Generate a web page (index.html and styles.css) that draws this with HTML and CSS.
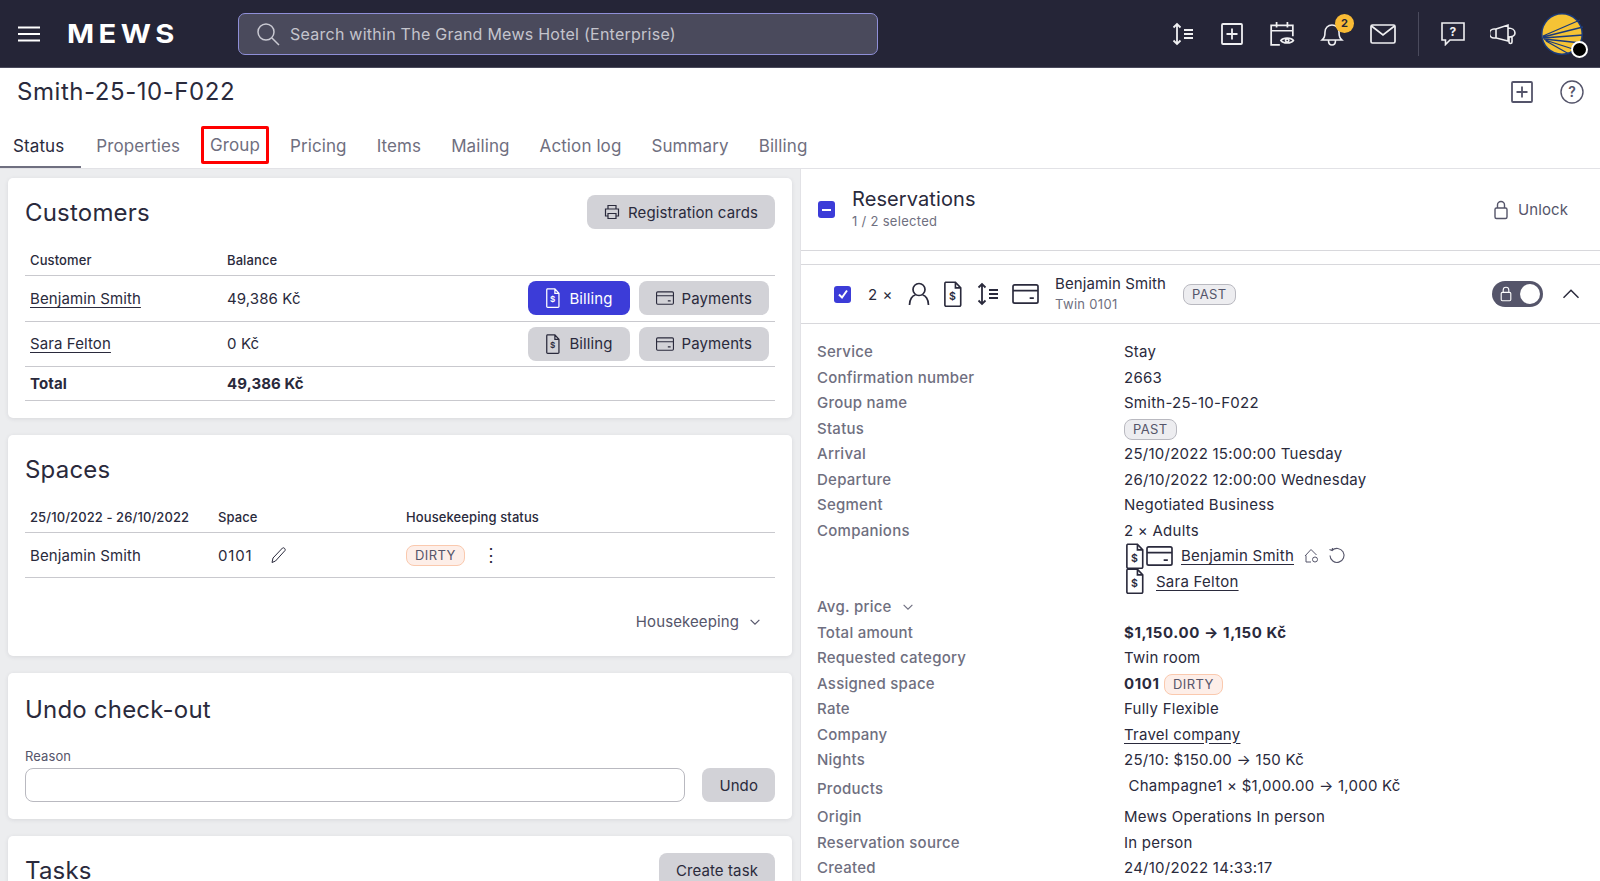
FILE: index.html
```html
<!DOCTYPE html>
<html lang="en">
<head>
    <meta charset="UTF-8">
    <title>Smith-25-10-F022</title>
    <link rel="stylesheet" href="styles.css">
</head>
<body>
    <svg class="sprites" width="0" height="0">
        <symbol id="i-bill" viewBox="0 0 24 32"><path d="M3 1.5h12l6.500 7v21a1.500 1.500 0 0 1-1.500 1.500H3.500A1.500 1.500 0 0 1 2 29.500V3a1.500 1.500 0 0 1 1-1.500zM15 1.500v7h6.500" fill="none" stroke="currentColor" stroke-width="2"/><text x="11.500" y="23" font-size="13" font-weight="600" text-anchor="middle" fill="currentColor" font-family="Inter, sans-serif">$</text></symbol>
        <symbol id="i-card" viewBox="0 0 32 24"><rect x="1" y="1" width="30" height="22" rx="2" fill="none" stroke="currentColor" stroke-width="2"/><path d="M1 8h30M21 17h5" fill="none" stroke="currentColor" stroke-width="2"/></symbol>
        <symbol id="i-sort" viewBox="0 0 24 24"><path d="M6 2v20M2.500 5.500 6 2l3.500 3.500M2.500 18.500 6 22l3.500-3.500M13 8h9M13 12h9M13 16h9" fill="none" stroke="currentColor" stroke-width="1.800"/></symbol>
        <symbol id="i-plus" viewBox="0 0 24 24"><rect x="2" y="2" width="20" height="20" rx="1" fill="none" stroke="currentColor" stroke-width="1.800"/><path d="M12 6.500v11M6.500 12h11" fill="none" stroke="currentColor" stroke-width="1.800"/></symbol>
        <symbol id="i-chev" viewBox="0 0 16 16"><path d="M3 5.500 8 10.500 13 5.500" fill="none" stroke="currentColor" stroke-width="1.300"/></symbol>
        <symbol id="i-lock" viewBox="0 0 16 20"><rect x="2" y="8" width="12" height="10.500" rx="1.500" fill="none" stroke="currentColor" stroke-width="1.400"/><path d="M4.500 8V5a3.500 3.500 0 0 1 7 0v3" fill="none" stroke="currentColor" stroke-width="1.400"/></symbol>
    </svg>

    <header class="topbar">
        <button class="icon-btn burger"><svg width="22" height="16" viewBox="0 0 22 16"><path d="M0 1.500h22M0 8h22M0 14.500h22" stroke="#fff" stroke-width="2"/></svg></button>
        <div class="logo">MEWS</div>
        <div class="search">
            <svg width="24" height="24" viewBox="0 0 24 24"><circle cx="10" cy="10" r="8" fill="none" stroke="#c9c9d2" stroke-width="1.500"/><path d="m16 16 7 7" stroke="#c9c9d2" stroke-width="1.500"/></svg>
            <span>Search within The Grand Mews Hotel (Enterprise)</span>
        </div>
        <nav class="top-icons">
            <svg class="ti" width="24" height="24"><use href="#i-sort"/></svg>
            <svg class="ti" width="24" height="24"><use href="#i-plus"/></svg>
            <svg class="ti" width="26" height="26" viewBox="0 0 24 24" fill="none" stroke="currentColor" stroke-width="1.600"><path d="M10 22H2V4h20v10M2 9h20M7 1v5M17 1v5"/><path d="M11 18c2-3 9.500-3 11.500 0-2 3-9.500 3-11.500 0z"/><circle cx="16.800" cy="18" r="1.500"/></svg>
            <div class="bell">
                <svg width="24" height="26" viewBox="0 0 24 26" fill="none" stroke="currentColor" stroke-width="1.600"><path d="M2 19c2-2 3-3 3-8 0-4 3-7 7-7s7 3 7 7c0 5 1 6 3 8zM8.500 19.500c0 6 7 6 7 0"/></svg>
                <span class="badge">2</span>
            </div>
            <svg class="ti" width="26" height="20" viewBox="0 0 26 20" fill="none" stroke="currentColor" stroke-width="1.700"><rect x="1" y="1" width="24" height="18" rx="1.500"/><path d="m1.500 2 11.500 9 11.500-9"/></svg>
            <span class="top-sep"></span>
            <svg class="ti" width="24" height="24" viewBox="0 0 24 24" fill="none" stroke="currentColor" stroke-width="1.600"><path d="M1 1h22v17H9l-4.500 4.500V18H1z"/><text x="12" y="14" font-size="12" font-weight="700" text-anchor="middle" fill="currentColor" stroke="none" font-family="Inter, sans-serif">?</text></svg>
            <svg class="ti" width="26" height="22" viewBox="0 0 26 22" fill="none" stroke="currentColor" stroke-width="1.600"><path d="M6 6 18 2v16L6 15zM6 6H4a4.500 4.500 0 0 0 0 9h2M18 5c4 0 7 2 7 5s-3 4-7 4M19 14v5c0 2 3 2 3 0v-5"/></svg>
            <div class="avatar">
                <svg width="44" height="44" viewBox="0 0 44 44"><circle cx="22" cy="22" r="21" fill="#1b3a7a"/><circle cx="22" cy="22" r="19.500" fill="#f5c335"/><path d="M3 24 40 8M3 25 43 15M3 26 43 23M4 27 41 31M5 28 36 38M6 29 29 42" stroke="#1b3a7a" stroke-width="1.300"/></svg>
                <span class="avatar-dot"></span>
            </div>
        </nav>
    </header>

    <div class="title-row">
        <h1>Smith-25-10-F022</h1>
        <div class="title-icons">
            <svg class="dim" width="24" height="24"><use href="#i-plus"/></svg>
            <svg class="dim" width="24" height="24" viewBox="0 0 24 24" fill="none" stroke="currentColor" stroke-width="1.400"><circle cx="12" cy="12" r="11"/><text x="12" y="17" font-size="14" font-weight="600" text-anchor="middle" fill="currentColor" stroke="none" font-family="Inter, sans-serif">?</text></svg>
        </div>
    </div>

    <nav class="tabs">
        <a class="tab active">Status</a>
        <a class="tab">Properties</a>
        <a class="tab marked">Group</a>
        <a class="tab">Pricing</a>
        <a class="tab">Items</a>
        <a class="tab">Mailing</a>
        <a class="tab">Action log</a>
        <a class="tab">Summary</a>
        <a class="tab">Billing</a>
    </nav>

    <main class="columns">
        <section class="left">
            <div class="card customers">
                <div class="card-head">
                    <h2>Customers</h2>
                    <button class="btn"><svg width="16" height="16" viewBox="0 0 16 16" fill="none" stroke="currentColor" stroke-width="1.200"><path d="M4 5V1.500h8V5M4 12H1.500V5h13v7H12M4 9.500h8v5H4z"/></svg>Registration cards</button>
                </div>
                <div class="grid-table">
                    <div class="row head"><span>Customer</span><span>Balance</span></div>
                    <div class="row"><span><a class="link">Benjamin Smith</a></span><span>49,386 Kč</span>
                        <div class="row-actions">
                            <button class="btn primary"><svg width="16" height="20"><use href="#i-bill"/></svg>Billing</button>
                            <button class="btn"><svg width="18" height="14"><use href="#i-card"/></svg>Payments</button>
                        </div>
                    </div>
                    <div class="row"><span><a class="link">Sara Felton</a></span><span>0 Kč</span>
                        <div class="row-actions">
                            <button class="btn"><svg width="16" height="20"><use href="#i-bill"/></svg>Billing</button>
                            <button class="btn"><svg width="18" height="14"><use href="#i-card"/></svg>Payments</button>
                        </div>
                    </div>
                    <div class="row total"><span>Total</span><span>49,386 Kč</span></div>
                </div>
            </div>

            <div class="card spaces">
                <div class="card-head"><h2>Spaces</h2></div>
                <div class="space-table">
                    <div class="row head"><span>25/10/2022 - 26/10/2022</span><span>Space</span><span>Housekeeping status</span></div>
                    <div class="row">
                        <span>Benjamin Smith</span>
                        <span class="space-no">0101 <svg width="18" height="18" viewBox="0 0 18 18" fill="none" stroke="currentColor" stroke-width="1"><path d="M2 16.500 3 12 12.500 2c1-1 3.500 1 2.500 2.500L5.500 15z"/></svg></span>
                        <span class="space-state"><span class="tag dirty">DIRTY</span><span class="dots">⋮</span></span>
                    </div>
                </div>
                <div class="hk">Housekeeping <svg width="14" height="14"><use href="#i-chev"/></svg></div>
            </div>

            <div class="card undo">
                <h2>Undo check-out</h2>
                <label>Reason</label>
                <div class="undo-row">
                    <div class="input"></div>
                    <button class="btn">Undo</button>
                </div>
            </div>

            <div class="card">
                <div class="card-head">
                    <h2>Tasks</h2>
                    <button class="btn">Create task</button>
                </div>
            </div>
        </section>

        <section class="right">
            <div class="res-head">
                <span class="check minus"></span>
                <div class="res-title">
                    <h3>Reservations</h3>
                    <small>1 / 2 selected</small>
                </div>
                <div class="unlock"><svg width="16" height="20"><use href="#i-lock"/></svg>Unlock</div>
            </div>
            <div class="peek"><span></span></div>
            <div class="res-item">
                <span class="check on"><svg width="12" height="12" viewBox="0 0 12 12"><path d="m2 6.500 3 3 5-7" fill="none" stroke="#fff" stroke-width="2"/></svg></span>
                <span class="count">2 ×</span>
                <div class="res-icons">
                    <svg width="22" height="24" viewBox="0 0 22 24" fill="none" stroke="currentColor" stroke-width="1.700"><circle cx="11" cy="7.500" r="6"/><path d="M1.500 23c0-6 3-9.500 6-10M20.500 23c0-6-3-9.500-6-10"/></svg>
                    <svg width="22" height="26"><use href="#i-bill"/></svg>
                    <svg width="24" height="24"><use href="#i-sort"/></svg>
                    <svg width="27" height="20"><use href="#i-card"/></svg>
                </div>
                <div class="res-name">
                    <span>Benjamin Smith</span>
                    <small>Twin 0101</small>
                </div>
                <span class="tag past">PAST</span>
                <div class="toggle"><svg width="14" height="16"><use href="#i-lock"/></svg><i></i></div>
                <svg class="collapse" width="20" height="20" viewBox="0 0 16 16"><path d="M2 11 8 5l6 6" fill="none" stroke="currentColor" stroke-width="1.200"/></svg>
            </div>
            <div class="details">
                <div class="d-row"><b>Service</b><span>Stay</span></div>
                <div class="d-row"><b>Confirmation number</b><span>2663</span></div>
                <div class="d-row"><b>Group name</b><span>Smith-25-10-F022</span></div>
                <div class="d-row"><b>Status</b><span><span class="tag past small">PAST</span></span></div>
                <div class="d-row"><b>Arrival</b><span>25/10/2022 15:00:00 Tuesday</span></div>
                <div class="d-row"><b>Departure</b><span>26/10/2022 12:00:00 Wednesday</span></div>
                <div class="d-row"><b>Segment</b><span>Negotiated Business</span></div>
                <div class="d-row"><b>Companions</b><span>2 × Adults</span></div>
                <div class="d-row comp"><b></b><span class="comp-line"><svg width="22" height="26"><use href="#i-bill"/></svg><svg width="27" height="20"><use href="#i-card"/></svg><a class="link">Benjamin Smith</a>
                    <svg class="soft" width="16" height="16" viewBox="0 0 16 16" fill="none" stroke="currentColor" stroke-width="1"><path d="M2 8 8 1.500 13.500 7M3 7.500V14h5"/><circle cx="12" cy="11.500" r="2.500"/></svg>
                    <svg class="soft" width="18" height="18" viewBox="0 0 18 18" fill="none" stroke="currentColor" stroke-width="1.100"><path d="M4 3.500a7 7 0 1 1-2 5M1.500 2.500 4 3.500 4.500 1"/></svg></span></div>
                <div class="d-row comp"><b></b><span class="comp-line"><svg width="22" height="26"><use href="#i-bill"/></svg><a class="link second">Sara Felton</a></span></div>
                <div class="d-row"><b>Avg. price <svg width="14" height="14"><use href="#i-chev"/></svg></b><span></span></div>
                <div class="d-row"><b>Total amount</b><span class="strong">$1,150.00 → 1,150 Kč</span></div>
                <div class="d-row"><b>Requested category</b><span>Twin room</span></div>
                <div class="d-row"><b>Assigned space</b><span><span class="strong">0101</span> <span class="tag dirty">DIRTY</span></span></div>
                <div class="d-row"><b>Rate</b><span>Fully Flexible</span></div>
                <div class="d-row"><b>Company</b><span><a class="link">Travel company</a></span></div>
                <div class="d-row"><b>Nights</b><span>25/10: $150.00 → 150 Kč</span></div>
                <div class="d-row products"><b>Products</b><span>&nbsp;Champagne1 × $1,000.00 → 1,000 Kč</span></div>
                <div class="d-row"><b>Origin</b><span>Mews Operations In person</span></div>
                <div class="d-row"><b>Reservation source</b><span>In person</span></div>
                <div class="d-row"><b>Created</b><span>24/10/2022 14:33:17</span></div>
            </div>
        </section>
    </main>
</body>
</html>
```

FILE: styles.css
```css
* {
    box-sizing: border-box;
}

html, body {
    margin: 0;
    height: 100%;
    overflow: hidden;
}

body {
    font-family: Inter, "Noto Sans", sans-serif;
    font-size: 15px;
    color: #2a2a3c;
    background: #fff;
    letter-spacing: 0.1px;
}

.sprites {
    position: absolute;
}

h1, h2, h3 {
    margin: 0;
    font-weight: 400;
}

button {
    font: inherit;
    letter-spacing: inherit;
    border: 0;
    cursor: pointer;
}

/* top bar */
.topbar {
    height: 68px;
    background: #252537;
    border-bottom: 1px solid #4a4a5c;
    display: flex;
    align-items: center;
    padding: 0 16px 0 18px;
}

.icon-btn {
    background: none;
    padding: 0;
    display: flex;
}

.logo {
    margin-left: 27px;
    width: 137px;
    color: #fff;
    font-size: 26px;
    font-weight: 700;
    letter-spacing: 4px;
    transform: scaleX(1.12);
    transform-origin: left center;
}

.search {
    margin-left: 34px;
    width: 640px;
    height: 42px;
    border: 1px solid #8f8fd8;
    border-radius: 7px;
    background: #4a4a5c;
    display: flex;
    align-items: center;
    gap: 10px;
    padding-left: 17px;
    color: #c4c4cc;
    font-size: 16px;
    letter-spacing: 0.25px;
}

.top-icons {
    margin-left: auto;
    display: flex;
    align-items: center;
    gap: 25px;
    color: #f0f0f2;
}

.bell {
    position: relative;
    display: flex;
    margin-right: 1px;
}

.badge {
    position: absolute;
    top: -7px;
    right: -10px;
    width: 19px;
    height: 19px;
    border-radius: 50%;
    background: #f9bb35;
    color: #252537;
    font-size: 11px;
    font-weight: 700;
    text-align: center;
    line-height: 19px;
}

.top-sep {
    width: 1px;
    height: 44px;
    background: #4a4a5c;
    margin: 0 -3px 0 -3px;
}

.avatar {
    position: relative;
    display: flex;
    margin-left: -1px;
}

.avatar-dot {
    position: absolute;
    right: -4px;
    bottom: -2px;
    width: 17px;
    height: 17px;
    border-radius: 50%;
    background: #000;
    border: 2px solid #fff;
}

/* title + tabs */
.title-row {
    height: 47px;
    display: flex;
    align-items: center;
    justify-content: space-between;
    padding: 0 16px 0 17px;
}

.title-row h1 {
    font-size: 24px;
    letter-spacing: 0.55px;
}

.title-icons {
    display: flex;
    gap: 26px;
    color: #54546a;
}

.tabs {
    height: 54px;
    display: flex;
    padding-top: 6px;
    border-bottom: 1px solid #e2e2e6;
    font-size: 17px;
}

.tab {
    padding: 0 15px;
    line-height: 50px;
    color: #6f6f80;
    margin-right: 0;
}

.tab.active {
    padding-left: 13px;
    padding-right: 17px;
    color: #2a2a3c;
    border-bottom: 2px solid #6f6f80;
}

.tab.marked {
    height: 38px;
    margin: 5px 6px 0;
    padding: 0 6px;
    line-height: 33px;
    border: 3px solid #f00;
    border-radius: 2px;
}

/* columns */
.columns {
    display: grid;
    grid-template-columns: 800px 800px;
    height: 712px;
}

.left {
    background: #ecedef;
    padding: 9px 8px 0 8px;
    display: flex;
    flex-direction: column;
    gap: 17px;
    overflow: hidden;
}

.card {
    flex: none;
    background: #fff;
    border-radius: 5px;
    padding: 17px 17px 17px;
    box-shadow: 0 1px 4px rgba(42, 42, 60, 0.1);
}

.card h2 {
    font-size: 24px;
    letter-spacing: 0.2px;
}

.card-head {
    display: flex;
    align-items: center;
    justify-content: space-between;
    min-height: 34px;
}

.btn {
    height: 34px;
    padding: 0 17px;
    border-radius: 8px;
    background: #d2d2d7;
    color: #2a2a3c;
    display: inline-flex;
    align-items: center;
    gap: 8px;
}

.btn.primary {
    background: #3c3cd8;
    color: #fff;
}

.link {
    color: inherit;
    text-decoration: underline;
    text-underline-offset: 3px;
}

.row {
    display: grid;
    align-items: center;
    border-bottom: 1px solid #c9c9ce;
}

.row.head {
    font-size: 13px;
    font-weight: 500;
}

/* customers */
.grid-table {
    margin-top: 15px;
}

.grid-table .row {
    grid-template-columns: 197px 200px 1fr;
    padding-left: 5px;
    height: 45.500px;
}

.grid-table .row.head {
    height: 32px;
}

.grid-table .row.total {
    height: 34px;
    font-weight: 700;
}

.row-actions {
    display: flex;
    justify-content: flex-end;
    gap: 9px;
    padding-right: 6px;
}

/* spaces */
.space-table {
    margin-top: 15px;
}

.space-table .row {
    grid-template-columns: 188px 188px 1fr;
    padding-left: 5px;
    height: 45px;
}

.space-table .row.head {
    height: 32px;
}

.space-no {
    display: flex;
    align-items: center;
    gap: 18px;
    letter-spacing: 0.8px;
}

.space-state {
    display: flex;
    align-items: center;
    gap: 17px;
}

.tag {
    display: inline-block;
    height: 21px;
    line-height: 19px;
    padding: 0 8px;
    font-size: 13px;
    border-radius: 8px;
    border: 1px solid;
    letter-spacing: 0.4px;
}

.tag.dirty {
    background: #fdeee8;
    border-color: #fac9ae;
    color: #55556a;
}

.tag.past {
    background: #ededf0;
    border-color: #b9b9c0;
    color: #55556a;
}

.dots {
    font-size: 18px;
    line-height: 1;
}

.hk {
    display: flex;
    justify-content: flex-end;
    align-items: center;
    gap: 9px;
    color: #55556a;
    padding: 26px 13px 0 0;
    height: 61px;
}

/* undo */
.undo label {
    display: block;
    font-size: 13px;
    color: #55556a;
    margin-top: 21px;
    line-height: 17px;
}

.undo h2 {
    margin-top: 3px;
    line-height: 34px;
}

.undo-row {
    display: flex;
    gap: 17px;
    margin-top: 3px;
}

.input {
    flex: 1;
    height: 34px;
    border: 1px solid #b9b9c0;
    border-radius: 8px;
}

/* reservations */
.right {
    border-left: 1px solid #e2e2e6;
    overflow: hidden;
}

.res-head {
    height: 82px;
    display: flex;
    align-items: center;
    padding: 0 32px 0 17px;
    border-bottom: 1px solid #d8d8dc;
}

.res-title {
    margin-left: 17px;
}

.res-title h3 {
    font-size: 20px;
    line-height: 28px;
    margin-top: -6px;
}

.res-title small, .res-name small {
    display: block;
    font-size: 13px;
    color: #6f6f80;
    letter-spacing: 0.3px;
}

.unlock {
    margin-left: auto;
    display: flex;
    align-items: center;
    gap: 9px;
    color: #55556a;
}

.check {
    width: 17px;
    height: 17px;
    border-radius: 3px;
    background: #3c3cd8;
    display: flex;
    align-items: center;
    justify-content: center;
    flex: none;
}

.check.minus::after {
    content: "";
    width: 9px;
    height: 2px;
    background: #fff;
}

.peek {
    height: 14px;
    border-bottom: 1px solid #d8d8dc;
    position: relative;
    overflow: hidden;
}

.peek span {
    display: none;
}

.res-item {
    height: 59px;
    display: flex;
    align-items: center;
    padding: 0 19px 0 33px;
    border-bottom: 1px solid #d8d8dc;
}

.count {
    margin-left: 17px;
    letter-spacing: 0.6px;
}

.res-icons {
    margin-left: 15px;
    display: flex;
    align-items: center;
    gap: 12px;
}

.res-name {
    margin-left: 16px;
    line-height: 20px;
}

.tag.past {
    margin-left: 17px;
}

.tag.past.small {
    margin-left: 0;
}

.toggle {
    margin-left: auto;
    width: 51px;
    height: 26px;
    border-radius: 13px;
    background: #55556a;
    color: #fff;
    display: flex;
    align-items: center;
    justify-content: space-between;
    padding: 0 3px 0 7px;
}

.toggle i {
    width: 20px;
    height: 20px;
    border-radius: 50%;
    background: #fff;
}

.collapse {
    margin-left: 18px;
}

.details {
    padding: 15px 0 0 16px;
}

.d-row {
    display: grid;
    grid-template-columns: 307px 1fr;
    height: 25.500px;
    line-height: 25.500px;
    letter-spacing: 0.25px;
}

.d-row b {
    font-weight: 500;
    color: #6f6f80;
    display: flex;
    align-items: center;
    gap: 9px;
}

.d-row.products {
    height: 31.500px;
}

.strong {
    font-weight: 700;
    letter-spacing: 0.6px;
}

.comp-line {
    display: flex;
    align-items: center;
    height: 25.500px;
}

.comp-line .link {
    margin-left: 8px;
}

.comp-line .link.second {
    margin-left: 10px;
}

.comp-line .soft {
    margin-left: 9px;
    color: #55556a;
}
```
